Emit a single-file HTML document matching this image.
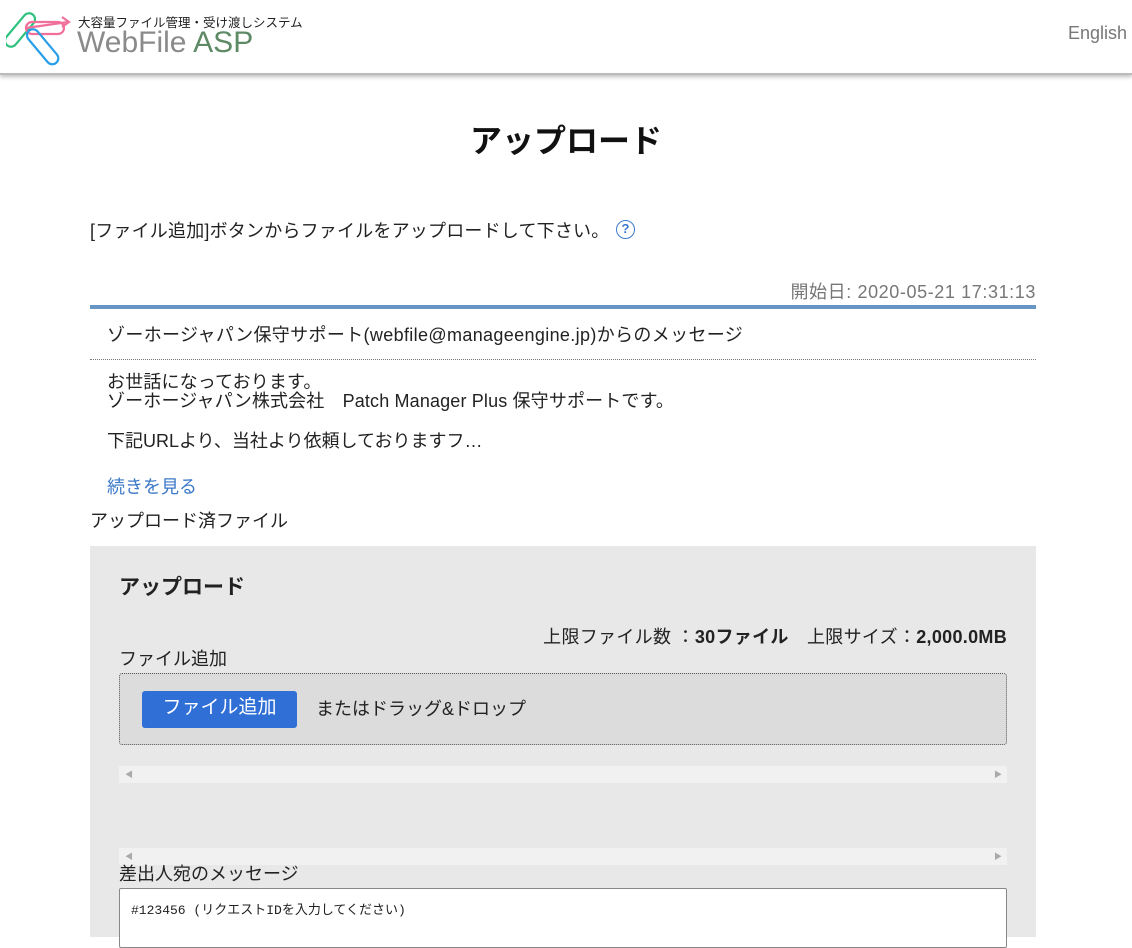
<!DOCTYPE html>
<html><head><meta charset="utf-8"><style>
*{margin:0;padding:0;box-sizing:border-box}
body{width:1132px;height:937px;overflow:hidden;background:#fff;font-family:"Liberation Sans","Noto Sans CJK JP",sans-serif;color:#222;position:relative}
.a{position:absolute;white-space:nowrap}
.hdr{position:absolute;left:0;top:0;width:1132px;height:75px;background:#fff;border-bottom:2px solid #bbb;box-shadow:0 2px 4px rgba(0,0,0,.25)}
</style></head><body>
<div class="hdr">
<svg class="a" style="left:6px;top:8px" width="66" height="60" viewBox="0 0 66 60">
<g fill="none" stroke-width="2.2">
<rect x="8" y="2" width="12" height="40" rx="6" transform="rotate(40 14 22)" stroke="#2ec27e"/>
<path d="M20 20 L62 14 M56 9 L63 14 L56 19" stroke="#f0709a"/>
<rect x="20" y="14" width="38" height="12" rx="6" stroke="#f0709a"/>
<rect x="30" y="18" width="12" height="42" rx="6" transform="rotate(-40 36 38)" stroke="#2a9fe8"/>
</g></svg>
<div class="a" style="left:78px;top:12px;font-size:12.5px;color:#222">大容量ファイル管理・受け渡しシステム</div>
<div class="a" style="left:77px;top:26px;font-size:30px;color:#8a8a8a">WebFile <span style="color:#5f8a66">ASP</span></div>
<div class="a" style="left:1068px;top:23px;font-size:18px;color:#777">English</div>
</div>
<div class="a" style="left:0;width:1132px;text-align:center;top:116px;font-size:32px;font-weight:bold;color:#111">アップロード</div>
<div class="a" style="left:90px;top:217px;font-size:18px;letter-spacing:0.2px">[ファイル追加]ボタンからファイルをアップロードして下さい。</div>
<div class="a" style="left:616px;top:220px;width:19px;height:19px;border:1.5px solid #3c7ad0;border-radius:50%;color:#3c7ad0;font-size:13px;font-weight:bold;text-align:center;line-height:16px">?</div>
<div class="a" style="right:96px;top:278px;font-size:18px;color:#777;letter-spacing:0.6px">開始日: 2020-05-21 17:31:13</div>
<div class="a" style="left:90px;top:305px;width:946px;height:4px;background:#6896c4"></div>
<div class="a" style="left:107px;top:321px;font-size:18px;letter-spacing:0.35px">ゾーホージャパン保守サポート(webfile@manageengine.jp)からのメッセージ</div>
<div class="a" style="left:90px;top:359px;width:946px;border-top:1px dotted #777"></div>
<div class="a" style="left:107px;top:373px;font-size:18px;line-height:19px;letter-spacing:0.15px">お世話になっております。<br>ゾーホージャパン株式会社　Patch Manager Plus 保守サポートです。</div>
<div class="a" style="left:107px;top:427px;font-size:18px">下記URLより、当社より依頼しておりますフ…</div>
<div class="a" style="left:107px;top:473px;font-size:18px;color:#3a78c8">続きを見る</div>
<div class="a" style="left:90px;top:507px;font-size:18px">アップロード済ファイル</div>
<div class="a" style="left:90px;top:546px;width:946px;height:391px;background:#e8e8e8"></div>
<div class="a" style="left:119px;top:571px;font-size:21px;font-weight:bold">アップロード</div>
<div class="a" style="right:125px;top:623px;font-size:18px;letter-spacing:0.3px">上限ファイル数 ：<b>30ファイル</b>　上限サイズ：<b>2,000.0MB</b></div>
<div class="a" style="left:119px;top:645px;font-size:18px">ファイル追加</div>
<div class="a" style="left:119px;top:673px;width:888px;height:72px;border:1.5px dotted #555;border-radius:3px;background:#dcdcdc"></div>
<div class="a" style="left:142px;top:691px;width:155px;height:37px;background:#2f6fd6;border-radius:3px;color:#fff;font-size:19px;text-align:center;line-height:34px">ファイル追加</div>
<div class="a" style="left:316px;top:695px;font-size:18px">またはドラッグ&amp;ドロップ</div>
<div class="a" style="left:119px;top:766px;width:888px;height:17px;background:#f1f1f1;font-size:8px;color:#aaa;line-height:17px"><span style="margin-left:6px">◀</span><span style="float:right;margin-right:5px">▶</span></div>
<div class="a" style="left:119px;top:848px;width:888px;height:17px;background:#f1f1f1;font-size:8px;color:#aaa;line-height:17px"><span style="margin-left:6px">◀</span><span style="float:right;margin-right:5px">▶</span></div>
<div class="a" style="left:119px;top:860px;font-size:18px">差出人宛のメッセージ</div>
<div class="a" style="left:119px;top:888px;width:888px;height:60px;background:#fff;border:1px solid #888;border-radius:2px"></div>
<div class="a" style="left:131px;top:899px;font-size:13px;font-family:'Liberation Mono','Noto Sans CJK JP',monospace">#123456 (リクエストIDを入力してください)</div>
</body></html>
